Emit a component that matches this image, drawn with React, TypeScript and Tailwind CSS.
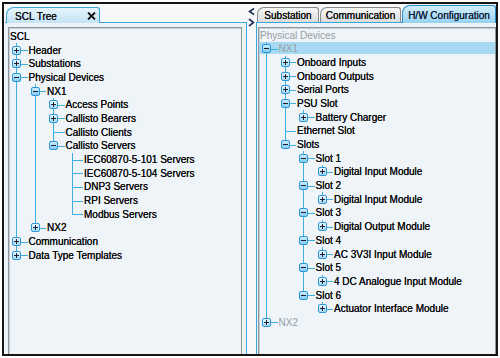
import React from "react";

type TreeNode = {
	label: string;
	kids?: TreeNode[];
	open?: boolean;
	muted?: boolean;
	selected?: boolean;
};

type Row = { node: TreeNode; level: number; rails: boolean[]; last: boolean };

const leaf = (label: string): TreeNode => ({ label });
const closed = (label: string, muted = false): TreeNode => ({ label, kids: [], muted });

const sclTree: TreeNode = {
	label: "SCL",
	open: true,
	kids: [
		closed("Header"),
		closed("Substations"),
		{
			label: "Physical Devices",
			open: true,
			kids: [
				{
					label: "NX1",
					open: true,
					kids: [
						closed("Access Points"),
						closed("Callisto Bearers"),
						leaf("Callisto Clients"),
						{
							label: "Callisto Servers",
							open: true,
							kids: [
								leaf("IEC60870-5-101 Servers"),
								leaf("IEC60870-5-104 Servers"),
								leaf("DNP3 Servers"),
								leaf("RPI Servers"),
								leaf("Modbus Servers"),
							],
						},
					],
				},
				closed("NX2"),
			],
		},
		closed("Communication"),
		closed("Data Type Templates"),
	],
};

const slot = (n: number, module: string): TreeNode => ({
	label: `Slot ${n}`,
	open: true,
	kids: [closed(module)],
});

const hwTree: TreeNode = {
	label: "Physical Devices",
	muted: true,
	open: true,
	kids: [
		{
			label: "NX1",
			muted: true,
			selected: true,
			open: true,
			kids: [
				closed("Onboard Inputs"),
				closed("Onboard Outputs"),
				closed("Serial Ports"),
				{ label: "PSU Slot", open: true, kids: [closed("Battery Charger")] },
				leaf("Ethernet Slot"),
				{
					label: "Slots",
					open: true,
					kids: [
						slot(1, "Digital Input Module"),
						slot(2, "Digital Input Module"),
						slot(3, "Digital Output Module"),
						slot(4, "AC 3V3I Input Module"),
						slot(5, "4 DC Analogue Input Module"),
						slot(6, "Actuator Interface Module"),
					],
				},
			],
		},
		closed("NX2", true),
	],
};

function flatten(root: TreeNode): Row[] {
	const rows: Row[] = [{ node: root, level: 0, rails: [], last: true }];
	const walk = (nodes: TreeNode[], level: number, rails: boolean[]) => {
		nodes.forEach((node, i) => {
			const last = i === nodes.length - 1;
			rows.push({ node, level, rails, last });
			if (node.kids && node.open) walk(node.kids, level + 1, [...rails, !last]);
		});
	};
	if (root.kids) walk(root.kids, 1, []);
	return rows;
}

function Expander({ open }: { open: boolean }) {
	return (
		<span
			className={
				"absolute left-[3px] top-[calc(50%-4.5px)] flex size-[9px] items-center justify-center rounded-[2px] border border-[#2a98d8] bg-linear-to-b " +
				(open ? "from-[#cdebfa] to-[#86caee]" : "from-[#eef8fe] to-[#a8d8f2]")
			}
		>
			<span className="absolute h-px w-[5px] bg-[#16203a]" />
			{!open && <span className="absolute h-[5px] w-px bg-[#16203a]" />}
		</span>
	);
}

function Tree({ root }: { root: TreeNode }) {
	const rows = flatten(root);
	return (
		<div className="flex flex-col">
			{rows.map(({ node, level, rails, last }, idx) => (
				<div key={idx} className="relative flex h-[13.7px] items-center">
					{node.selected && (
						<span className="absolute inset-x-0 top-0 bottom-[1.5px] bg-[#a7daf2]" />
					)}
					{rails.map((on, i) => (
						<span key={i} className="relative h-full w-[18.5px] shrink-0">
							{on && <span className="absolute left-[7px] top-0 h-full w-px bg-[#3eaee3]" />}
						</span>
					))}
					{level > 0 && (
						<span className="relative h-full w-[18.5px] shrink-0">
							<span
								className={
									"absolute left-[7px] top-0 w-px bg-[#3eaee3] " + (last ? "h-1/2" : "h-full")
								}
							/>
							<span className="absolute left-[7px] right-0 top-1/2 h-px bg-[#3eaee3]" />
							{node.kids && <Expander open={!!node.open} />}
						</span>
					)}
					<span
						className={
							"relative ml-px whitespace-nowrap text-[10px] leading-[13px] " +
							(node.muted
								? "text-[#979ea5]"
								: "text-[#0f0f0f] [text-shadow:0_0_0.35px_#000]")
						}
					>
						{node.label}
					</span>
				</div>
			))}
		</div>
	);
}

function CloseX() {
	return (
		<svg width="9" height="8" viewBox="0 0 9 8" className="mr-[3px] ml-auto">
			<path d="M1 0.5 L8 7.5 M8 0.5 L1 7.5" stroke="#111" strokeWidth="1.8" />
		</svg>
	);
}

function SideTab({ label, width }: { label: string; width: string }) {
	return (
		<div
			className={
				"flex h-[15px] items-center justify-center rounded-tl-[7px] rounded-tr-[3px] border border-b-0 border-[#85898e] bg-linear-to-b from-[#f7f7f7] to-[#dadcde] text-[10px] text-[#121212] [text-shadow:0_0_0.35px_#000] " +
				width
			}
		>
			{label}
		</div>
	);
}

export default function App() {
	return (
		<div className="h-[358px] w-[500px] bg-white p-[2px] font-['Liberation_Sans',Arial,sans-serif]">
			<div className="flex h-[354px] w-[496px] border-2 border-[#151515] bg-[#f6f8fa] pl-px">
				{/* left: SCL tree */}
				<div className="flex w-[242px] flex-col">
					<div className="flex h-[18px] items-end pl-px">
						<div className="z-10 -mb-px flex h-[16px] w-[94px] items-center rounded-tl-[8px] rounded-tr-[3px] border border-b-0 border-[#3aa6dc] bg-linear-to-b from-[#e6f4fc] to-[#c4e3f5] pl-[8px] pt-px text-[10px] text-[#121212] [text-shadow:0_0_0.35px_#000]">
							SCL Tree
							<CloseX />
						</div>
					</div>
					<div className="flex flex-1 flex-col border-t border-r border-[#3aa6dc] bg-[#eef3f7] pt-[4px] pr-[4px] pl-[3px]">
						<div className="flex-1 border-t border-r border-l border-[#8f959b] bg-[#eff4f9] pt-[1.5px] shadow-[inset_1px_1px_0_#c8d0d7]">
							<Tree root={sclTree} />
						</div>
					</div>
				</div>

				{/* splitter */}
				<div className="w-[9px] pl-px pt-[4px]">
					<svg width="7" height="19" viewBox="0 0 7 19">
						<polyline points="6,0.5 1.5,3.5 6,6.5" fill="none" stroke="#1f2b52" strokeWidth="1.6" />
						<polyline points="1,11 5.5,14.5 1,18" fill="none" stroke="#1f2b52" strokeWidth="1.6" />
					</svg>
				</div>

				{/* right: H/W configuration */}
				<div className="flex w-[240px] flex-col">
					<div className="flex h-[18px] items-end gap-px pl-px">
						<SideTab label="Substation" width="w-[62px]" />
						<SideTab label="Communication" width="w-[81px]" />
						<div className="z-10 -mb-px flex h-[18px] flex-1 items-center justify-center rounded-tl-[8px] rounded-tr-[3px] border border-b-0 border-[#2b8cc6] bg-linear-to-b from-[#d4eefa] to-[#93d1f0] pt-px text-[10px] text-[#10203a] [text-shadow:0_0_0.35px_#10203a]">
							H/W Configuration
						</div>
					</div>
					<div className="flex flex-1 flex-col border-t border-l border-[#3aa6dc] bg-[#eef3f7] pt-[4px] pl-px">
						<div className="flex-1 border-t border-r border-l border-[#8f959b] bg-[#eff4f9] pt-[0.2px] shadow-[inset_1px_1px_0_#c8d0d7]">
							<Tree root={hwTree} />
						</div>
					</div>
				</div>
			</div>
		</div>
	);
}
